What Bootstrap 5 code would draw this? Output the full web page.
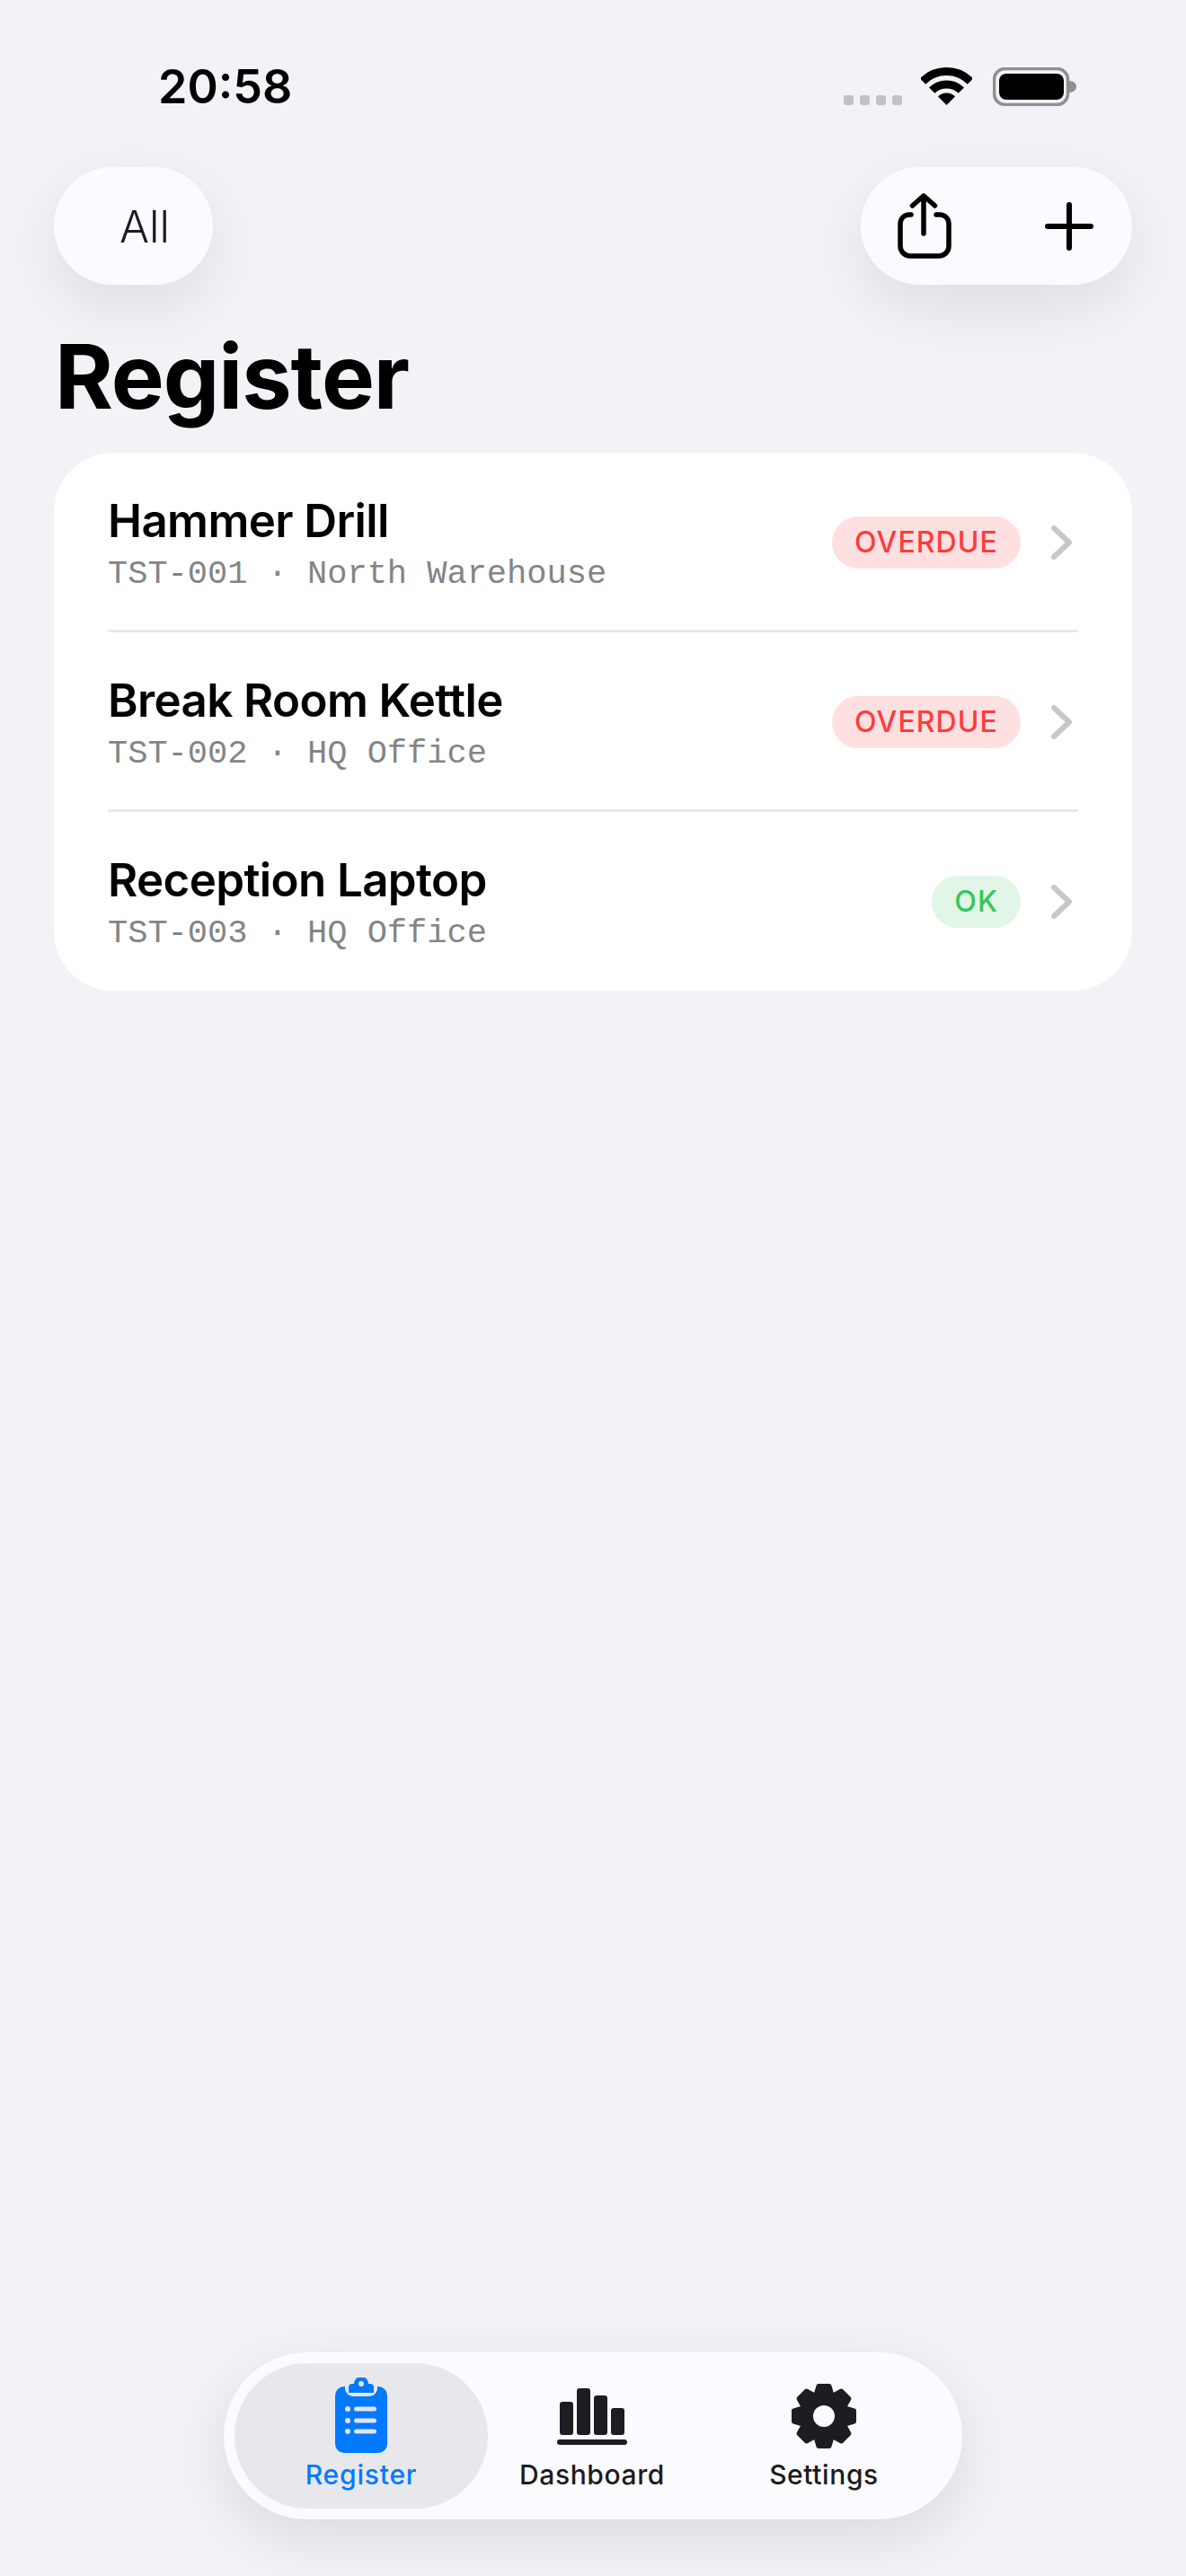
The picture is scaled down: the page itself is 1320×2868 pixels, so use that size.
<!DOCTYPE html>
<html lang="en">
<head>
<meta charset="utf-8">
<title>Register</title>
<link href="https://cdn.jsdelivr.net/npm/bootstrap@5.3.0/dist/css/bootstrap.min.css" rel="stylesheet">
<style>
html,body{height:100%}
body{background:#f2f2f7;font-family:Inter,"Noto Sans",sans-serif;color:#000;width:1320px;height:2868px;overflow:hidden}
.screen{height:2868px}
.status{height:186px;padding:75px 122px 0 176px}
.clock{font-size:52px;font-weight:600;line-height:44px;height:44px}
.sig-dots{gap:7px;margin:31px 0 0 0}
.sig-dots i{display:block;width:11px;height:11px;border-radius:3px;background:#c1c1c6}
.stat-right{gap:23px}
.wifi{display:block;width:57px;height:43px;margin-left:-2px}
.batt{display:block;width:93px;height:43px}
.topbar{padding:0 60px}
.glass{background:#fbfbff;box-shadow:0 24px 72px rgba(0,0,0,.085)}
.filter-pill{width:177px;height:131px;border-radius:65.5px;font-size:49px;font-weight:350;color:#1c1c1e;padding-left:73px;line-height:133px}
.actions{width:302px;height:131px;border-radius:65.5px;padding:0 43px 0 41px}
.page-title{font-size:99px;font-weight:700;line-height:124px;margin:40px 0 23px 61px;letter-spacing:-1px}
.rows{margin:0 60px;background:#fff;border-radius:66px;overflow:hidden}
.rowitem{height:200px;margin:0 60px;padding:0;border:0;background:transparent;color:#000;position:relative}
.rowitem:last-child{height:199px}
.rowitem:not(:last-child)::after{content:"";position:absolute;left:0;right:0;bottom:0;height:3px;background:#e9e9eb}
.nm{font-size:51px;font-weight:600;line-height:60px;letter-spacing:-.6px}
.sb{font-family:"Liberation Mono",monospace;font-size:37px;line-height:38px;color:#848486;margin-top:10px}
.chip{height:58px;border-radius:29px;font-size:32px;font-weight:550;line-height:58px;padding:0 25px;letter-spacing:1.1px}
.chip-bad{background:#ffe0e1;color:#ff3b3b}
.chip-ok{background:#e1f6e6;color:#34c759}
.chev{display:block;width:26px;height:40px;margin:0 5px 0 33px}
.tabbar{margin:auto auto 63px;width:822px;height:186px;border-radius:93px;padding:12px;box-shadow:0 20px 70px rgba(0,0,0,.1);display:grid;grid-template-columns:282px 232px 284px}
.tabitem{height:162px;font-size:30px;font-weight:450;line-height:36px;color:#1c1c22;padding-top:16px;letter-spacing:.6px}
.tabitem svg{display:block;height:84px;margin-bottom:6px}
.tab-on{background:#e8e8ec;border-radius:81px;color:#007aff;font-weight:500;letter-spacing:.8px}
</style>
</head>
<body>
<div class="screen d-flex flex-column">
  <div class="status d-flex justify-content-between align-items-start">
    <div class="clock">20:58</div>
    <div class="stat-right d-flex align-items-start">
      <div class="sig-dots d-flex"><i></i><i></i><i></i><i></i></div>
      <svg class="wifi" viewBox="0 0 57 43"><g transform="translate(28.5 42)"><path d="M-26.5 -26.5A37.5 37.5 0 0 1 26.5 -26.5M-16.3 -16.3A23 23 0 0 1 16.3 -16.3" fill="none" stroke="#000" stroke-width="9"/><path d="M0 0L-9.5 -9.5A13.5 13.5 0 0 1 9.5 -9.5Z"/></g></svg>
      <svg class="batt" viewBox="0 0 93 43"><rect x="1.5" y="1.5" width="82" height="40" rx="12" fill="none" stroke="#8e8e93" stroke-width="3.5"/><rect x="7" y="7" width="72" height="29" rx="8"/><path d="M85 15c5 0 8 3 8 6.500s-3 6.500-8 6.500Z" fill="#8e8e93"/></svg>
    </div>
  </div>

  <div class="topbar d-flex justify-content-between">
    <div class="filter-pill glass">All</div>
    <div class="actions glass d-flex justify-content-between align-items-center">
      <svg width="60" height="73" viewBox="0 0 60 73" fill="none" stroke="#000" stroke-width="5.500" stroke-linecap="round" stroke-linejoin="round"><path d="M15 24H13A10 10 0 0 0 3 34V59A11 11 0 0 0 14 70H46A11 11 0 0 0 57 59V34A10 10 0 0 0 47 24H43"/><path d="M29 3V45M16.500 14L29 3L41.500 14"/></svg>
      <svg width="54" height="54" viewBox="0 0 54 54" fill="none" stroke="#000" stroke-width="6" stroke-linecap="round"><path d="M27 3V51M3 27H51"/></svg>
    </div>
  </div>

  <h1 class="page-title">Register</h1>

  <div class="rows list-group">
    <div class="rowitem list-group-item d-flex justify-content-between align-items-center">
      <div><div class="nm">Hammer Drill</div><div class="sb">TST-001 · North Warehouse</div></div>
      <div class="d-flex align-items-center"><span class="chip chip-bad">OVERDUE</span><svg class="chev" viewBox="0 0 26 40" fill="none" stroke="#c7c7cc" stroke-width="6" stroke-linecap="round" stroke-linejoin="round"><path d="M4 4L21 20L4 36"/></svg></div>
    </div>
    <div class="rowitem list-group-item d-flex justify-content-between align-items-center">
      <div><div class="nm">Break Room Kettle</div><div class="sb">TST-002 · HQ Office</div></div>
      <div class="d-flex align-items-center"><span class="chip chip-bad">OVERDUE</span><svg class="chev" viewBox="0 0 26 40" fill="none" stroke="#c7c7cc" stroke-width="6" stroke-linecap="round" stroke-linejoin="round"><path d="M4 4L21 20L4 36"/></svg></div>
    </div>
    <div class="rowitem list-group-item d-flex justify-content-between align-items-center">
      <div><div class="nm">Reception Laptop</div><div class="sb">TST-003 · HQ Office</div></div>
      <div class="d-flex align-items-center"><span class="chip chip-ok">OK</span><svg class="chev" viewBox="0 0 26 40" fill="none" stroke="#c7c7cc" stroke-width="6" stroke-linecap="round" stroke-linejoin="round"><path d="M4 4L21 20L4 36"/></svg></div>
    </div>
  </div>

  <nav class="tabbar glass">
    <div class="tabitem tab-on d-flex flex-column align-items-center">
      <svg width="60" viewBox="0 0 60 84"><rect x="1" y="10" width="58" height="74" rx="10" fill="#007aff"/><path d="M12 6H48V12A9 9 0 0 1 39 21H21A9 9 0 0 1 12 12Z" fill="#e8e8ec"/><path d="M16 17V11A4 4 0 0 1 20 7H22A8 8 0 0 1 38 7H40A4 4 0 0 1 44 11V17Z" fill="#007aff"/><circle cx="30" cy="7" r="3" fill="#e8e8ec"/><g fill="#e4e4ea"><circle cx="15" cy="35" r="3"/><circle cx="15" cy="48" r="3"/><circle cx="15" cy="60" r="3"/><rect x="22" y="32.500" width="25" height="5" rx="2.500"/><rect x="22" y="45.500" width="25" height="5" rx="2.500"/><rect x="22" y="57.500" width="25" height="5" rx="2.500"/></g></svg>
      <span>Register</span>
    </div>
    <div class="tabitem d-flex flex-column align-items-center">
      <svg width="78" viewBox="0 0 78 84" fill="#1c1c22"><rect x="3" y="27" width="15" height="37" rx="3"/><rect x="22" y="12" width="15" height="52" rx="3"/><rect x="41" y="20" width="15" height="44" rx="3"/><rect x="60" y="34" width="15" height="30" rx="3"/><rect x="0" y="69" width="78" height="6" rx="3"/></svg>
      <span>Dashboard</span>
    </div>
    <div class="tabitem d-flex flex-column align-items-center">
      <svg width="74" viewBox="-37 -43 74 84"><g fill="#1c1c22" stroke="#1c1c22" stroke-width="5" stroke-linejoin="round"><circle r="25"/><path d="M-6 -33.500H6L10 -20H-10Z"/><path transform="rotate(45)" d="M-6 -33.500H6L10 -20H-10Z"/><path transform="rotate(90)" d="M-6 -33.500H6L10 -20H-10Z"/><path transform="rotate(135)" d="M-6 -33.500H6L10 -20H-10Z"/><path transform="rotate(180)" d="M-6 -33.500H6L10 -20H-10Z"/><path transform="rotate(225)" d="M-6 -33.500H6L10 -20H-10Z"/><path transform="rotate(270)" d="M-6 -33.500H6L10 -20H-10Z"/><path transform="rotate(315)" d="M-6 -33.500H6L10 -20H-10Z"/></g><circle r="12" fill="#fbfbff"/></svg>
      <span>Settings</span>
    </div>
  </nav>
</div>
<script src="https://cdn.jsdelivr.net/npm/bootstrap@5.3.0/dist/js/bootstrap.bundle.min.js"></script>
</body>
</html>
